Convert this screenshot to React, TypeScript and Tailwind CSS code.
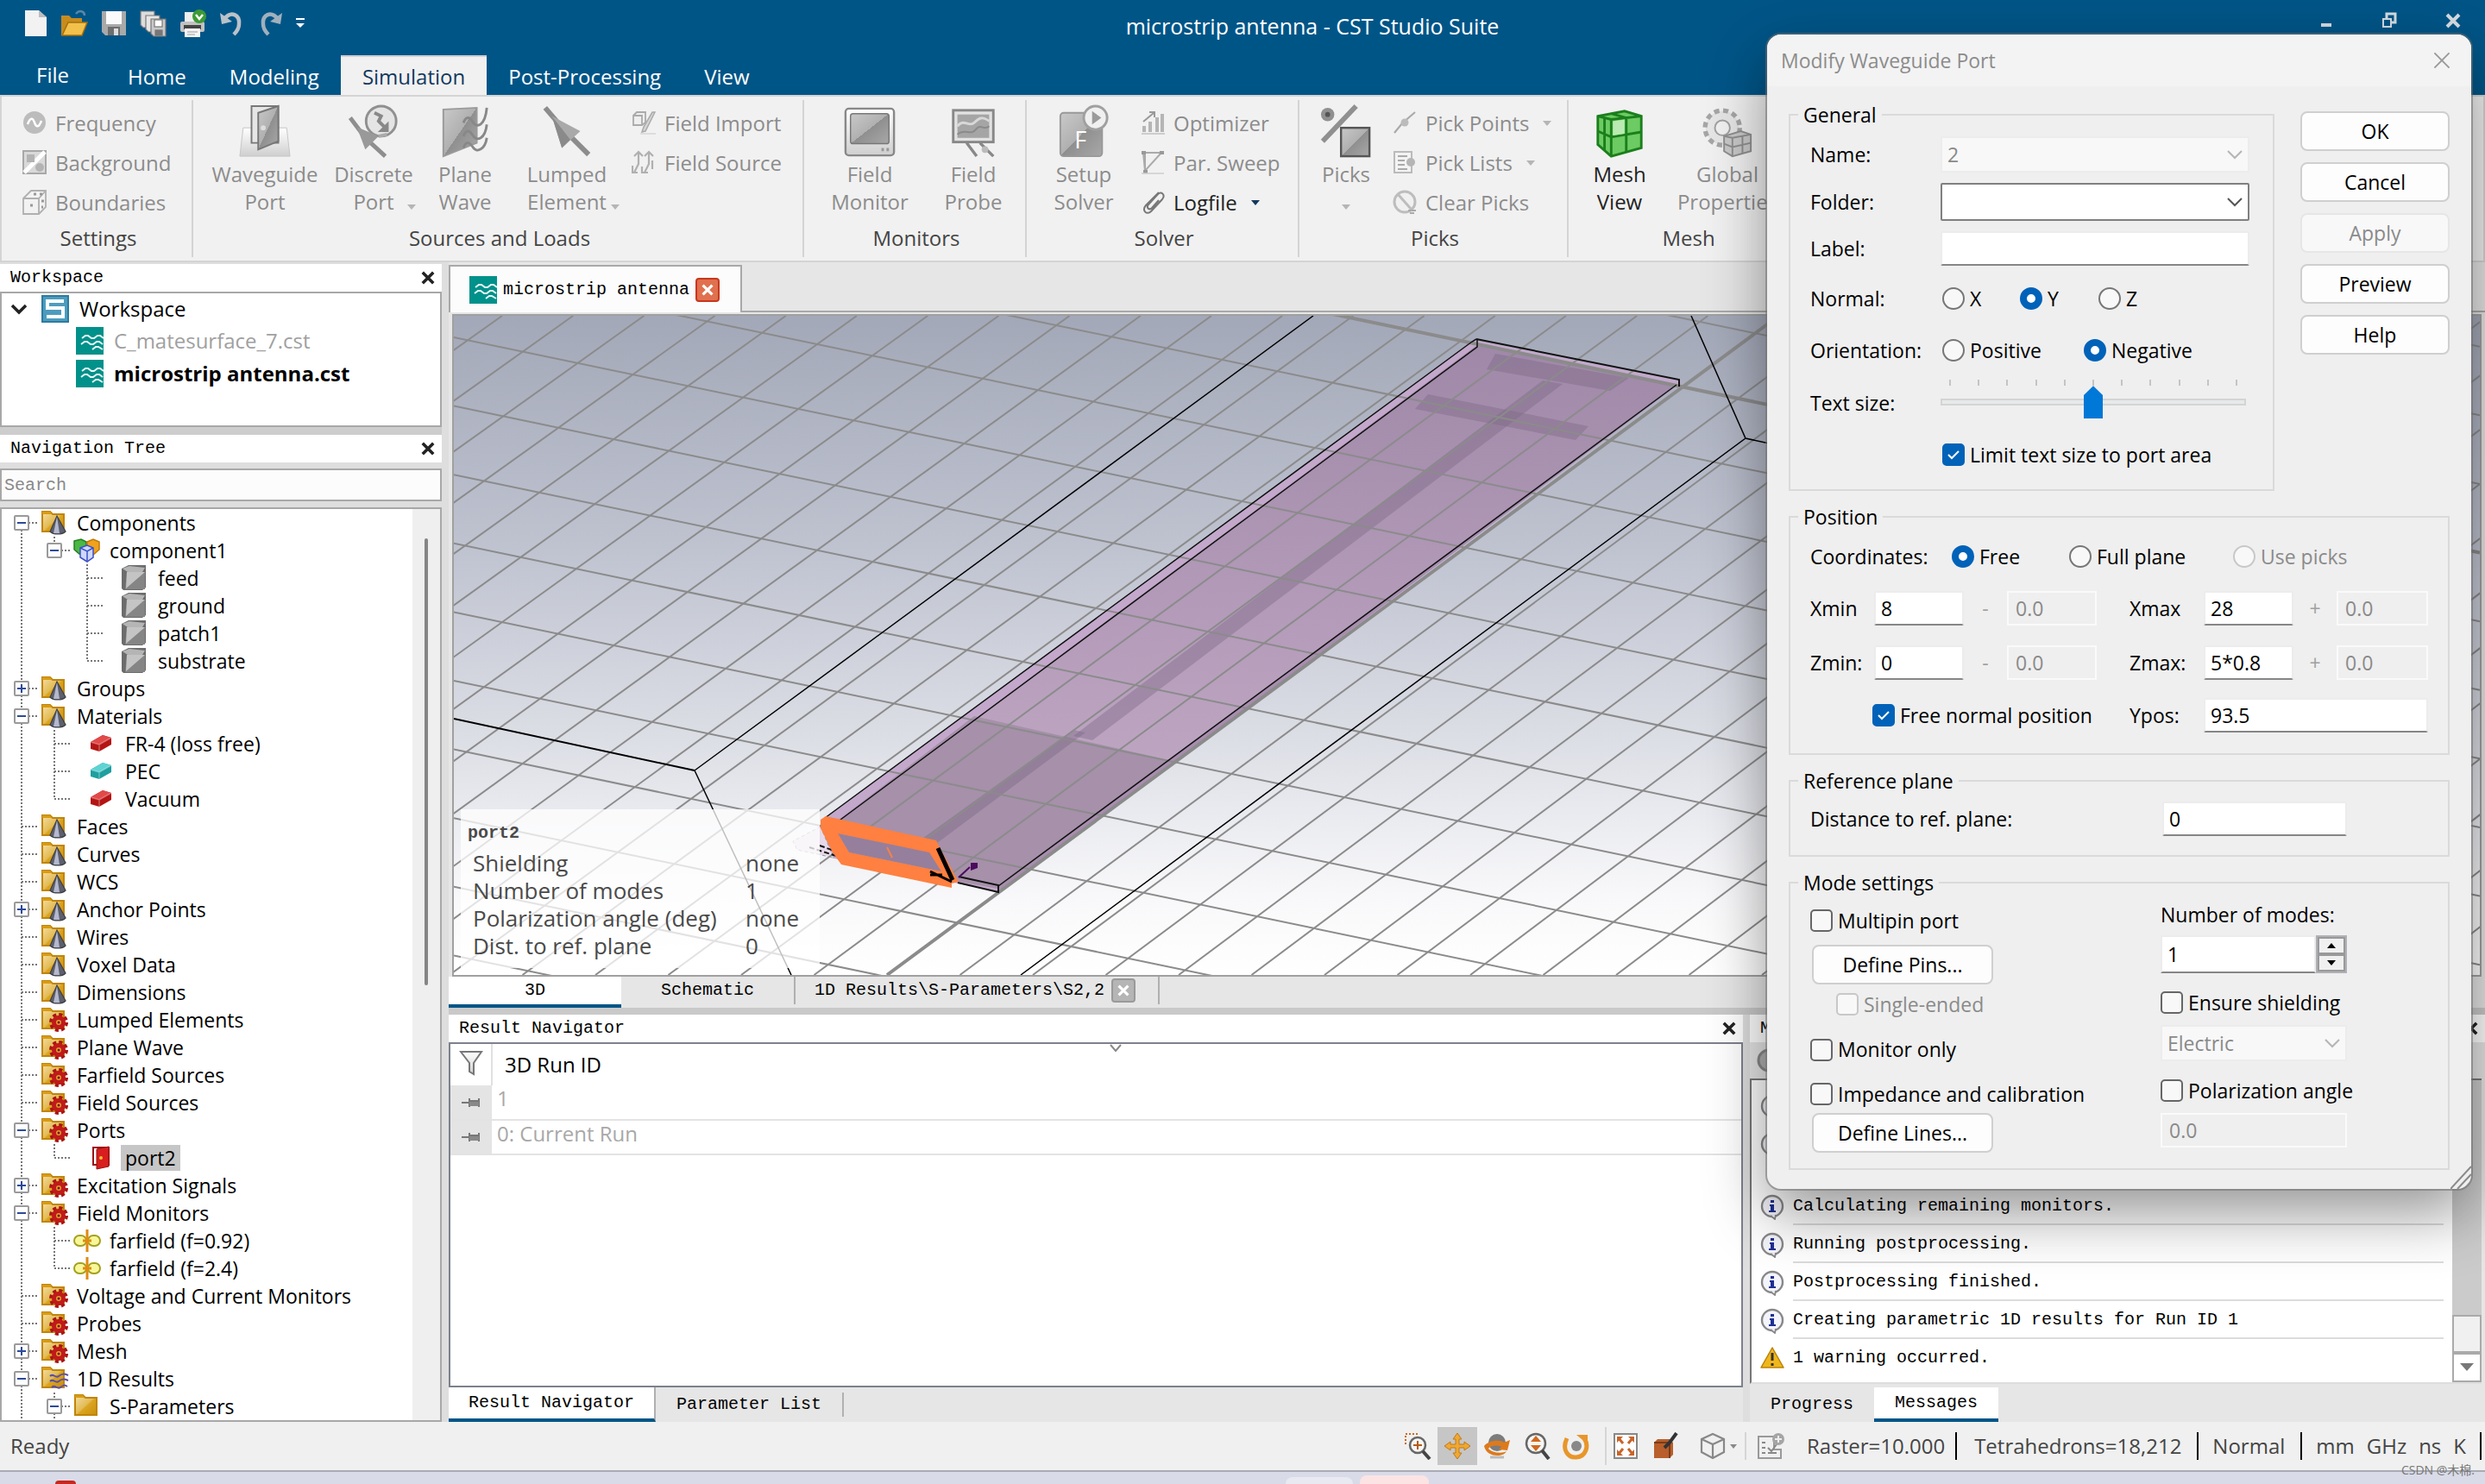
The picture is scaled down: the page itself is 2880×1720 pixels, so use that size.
import { useState } from "react";
import type { ReactNode } from "react";

const mono = "font-['Liberation_Mono','Noto_Sans_CJK_SC',monospace] text-[20px] leading-[32px]";

/* ---------- small shared glyphs ---------- */

const CloseX = ({ size = 18, color = "#222", width = 4 }: { size?: number; color?: string; width?: number }) => (
  <svg width={size} height={size} viewBox="0 0 18 18" stroke={color} strokeWidth={width} fill="none">
    <path d="M2 2 L16 16 M16 2 L2 16" />
  </svg>
);

const DownArrow = ({ color = "#b5b5b5" }: { color?: string }) => (
  <svg width="10" height="7" viewBox="0 0 10 7">
    <path d="M0 0H10L5 6Z" fill={color} />
  </svg>
);

const CstIcon = () => (
  <svg width="32" height="32" viewBox="0 0 32 32" className="shrink-0">
    <rect width="32" height="32" fill="#00918a" />
    <g fill="none" stroke="#e8fbfa" strokeWidth="2">
      <path d="M7 13l4-3h3l4 3h3l4-3h3l4 3" />
      <path d="M6 20l4-3h3l4 3h3l4-3h3l4 3" />
      <path d="M19 26l4-3h3l5 3" />
    </g>
  </svg>
);

/* ---------- title bar ---------- */

const QuickIcons = () => (
  <div className="flex items-center gap-[14px] pl-6 pt-[11px]">
    <button aria-label="New">
      <svg width="32" height="32" viewBox="0 0 32 32">
        <path d="M5 1H21L30 9V31H5Z" fill="#f2f2f2" />
        <path d="M21 1V9H30Z" fill="#bdbdbd" />
      </svg>
    </button>
    <button aria-label="Open">
      <svg width="32" height="32" viewBox="0 0 32 32">
        <path d="M18 5c4-5 10-3 10 2" stroke="#5b87a5" strokeWidth="2.5" fill="none" />
        <path d="M1 7H10L13 10H25V30H1Z" fill="#c78c1e" />
        <path d="M2 30L9 15H31L25 30Z" fill="#f2c14c" stroke="#a86f0a" strokeWidth="1.5" />
      </svg>
    </button>
    <button aria-label="Save">
      <svg width="32" height="32" viewBox="0 0 32 32">
        <path d="M2 2H30V30H6L2 26Z" fill="#a9a9a9" />
        <rect x="7" y="2" width="18" height="15" fill="#fafafa" />
        <rect x="9" y="20" width="14" height="10" fill="#6e6e6e" />
        <rect x="16" y="22" width="5" height="8" fill="#ddd" />
      </svg>
    </button>
    <button aria-label="Save all">
      <svg width="32" height="32" viewBox="0 0 32 32" stroke="#777" strokeWidth="1.2">
        <path d="M1 2H17V21H4L1 18Z" fill="#dcdcdc" />
        <path d="M7 7H23V26H10L7 23Z" fill="#e6e6e6" />
        <path d="M13 11H30V31H16L13 28Z" fill="#c9c9c9" />
        <rect x="17" y="12" width="9" height="8" fill="#fff" />
        <rect x="18" y="24" width="8" height="6" fill="#777" />
      </svg>
    </button>
    <button aria-label="Print">
      <svg width="32" height="32" viewBox="0 0 32 32">
        <rect x="6" y="3" width="18" height="12" fill="#eee" />
        <rect x="1" y="14" width="28" height="12" rx="2" fill="#c2c2c2" />
        <rect x="5" y="18" width="20" height="5" fill="#444" />
        <rect x="6" y="22" width="18" height="10" fill="#f5f5f5" />
        <path d="M9 26H21M9 29H18" stroke="#999" />
        <circle cx="23" cy="8" r="8" fill="#3c9b35" />
        <path d="M19 6l4 5l4-5" fill="none" stroke="#fff" strokeWidth="2.5" />
      </svg>
    </button>
    <button aria-label="Undo">
      <svg width="30" height="32" viewBox="0 0 30 32">
        <path d="M6 11C14 1 24 6 23 17c0 5-3 9-6 12" fill="none" stroke="#b9c2c9" strokeWidth="4.5" />
        <path d="M1 4L3 17L15 14Z" fill="#b9c2c9" />
      </svg>
    </button>
    <button aria-label="Redo">
      <svg width="30" height="32" viewBox="0 0 30 32">
        <path d="M24 11C16 1 6 6 7 17c0 5 3 9 6 12" fill="none" stroke="#9fb0bd" strokeWidth="4.5" />
        <path d="M29 4L27 17L15 14Z" fill="#9fb0bd" />
      </svg>
    </button>
    <button aria-label="Customize">
      <svg width="12" height="16" viewBox="0 0 12 16" fill="#fff">
        <rect x="1" y="2" width="10" height="2" />
        <path d="M1 8H11L6 13Z" />
      </svg>
    </button>
  </div>
);

const menuTabs = ["File", "Home", "Modeling", "Simulation", "Post-Processing", "View"];

const TitleBar = () => (
  <header className="bg-[#005587] text-white">
    <div className="flex h-16 items-start">
      <QuickIcons />
      <h1 className="flex-1 pt-[14px] text-center text-[25px] leading-8">microstrip antenna - CST Studio Suite</h1>
      <div className="flex gap-[56px] pr-7 pt-[14px]">
        <button aria-label="Minimize">
          <svg width="16" height="20"><rect x="2" y="13" width="12" height="4" fill="#d5dde2" /></svg>
        </button>
        <button aria-label="Restore">
          <svg width="18" height="20" fill="none" stroke="#d5dde2" strokeWidth="2">
            <path d="M6 7V2H16V12H12" strokeWidth="3" />
            <rect x="2" y="8" width="9" height="9" />
          </svg>
        </button>
        <button aria-label="Close"><CloseX color="#d5dde2" /></button>
      </div>
    </div>
    <nav className="flex h-[46px] pl-[17px] text-[24px] leading-8">
      {menuTabs.map((tab) => (
        <button
          key={tab}
          className={
            tab === "Simulation"
              ? "border-t-2 border-[#d0d0d0] bg-[#f1f1f1] px-[25px] pt-[2px] text-[#12395e]"
              : tab === "File"
              ? "mr-[18px] px-[25px]"
              : "px-[25px] pt-1"
          }
        >
          {tab}
        </button>
      ))}
    </nav>
  </header>
);

/* ---------- ribbon icons ---------- */

const RibbonDefs = () => (
  <svg width="0" height="0" className="absolute">
    <defs>
      <linearGradient id="steel" x1="0" y1="0" x2="1" y2="1">
        <stop offset="0" stopColor="#c9c9c9" />
        <stop offset="0.5" stopColor="#b0b0b0" />
        <stop offset="0.5" stopColor="#8f8f8f" />
        <stop offset="1" stopColor="#a8a8a8" />
      </linearGradient>
      <linearGradient id="light" x1="0" y1="0" x2="0" y2="1">
        <stop offset="0" stopColor="#fff" />
        <stop offset="1" stopColor="#cfcfcf" />
      </linearGradient>
      <linearGradient id="gold" x1="0" y1="0" x2="1" y2="1">
        <stop offset="0" stopColor="#f5dfa4" />
        <stop offset="0.5" stopColor="#e3bb55" />
        <stop offset="0.55" stopColor="#dba520" />
        <stop offset="1" stopColor="#c98f0c" />
      </linearGradient>
    </defs>
  </svg>
);

const big: Record<string, ReactNode> = {
  waveguide: (
    <>
      <path d="M6 28H58L62 62H2Z" fill="url(#light)" stroke="#c5c5c5" />
      <path d="M16 2H48V46H16Z" fill="#e6e6e6" stroke="#777" strokeWidth="2" />
      <path d="M24 10L48 2V44L24 54Z" fill="url(#steel)" stroke="#777" strokeWidth="2" />
      <circle cx="30" cy="28" r="3" fill="#ddd" />
    </>
  ),
  discrete: (
    <>
      <circle cx="41" cy="20" r="18" fill="#e4e4e4" stroke="#909090" strokeWidth="3" />
      <path d="M33 10l8 4l-3 6l10 10" fill="none" stroke="#888" strokeWidth="4" />
      <path d="M50 20V33H37Z" fill="#888" />
      <path d="M4 16L22 40L46 62" fill="none" stroke="#8e8e8e" strokeWidth="5" />
      <path d="M12 27L38 38L22 54Z" fill="#999" />
      <path d="M38 38L48 36" stroke="#aaa" strokeWidth="4" />
    </>
  ),
  plane: (
    <>
      <path d="M6 6L46 4V46L6 62Z" fill="url(#steel)" stroke="#9a9a9a" strokeWidth="2" />
      <g fill="none" stroke="#888" strokeWidth="3">
        <path d="M30 22c4-10 8-6 12 0s14 4 16-18" />
        <path d="M30 38c4-10 8-6 12 0s14 4 16-14" />
        <path d="M30 52c4-10 8-6 12 0s14 2 16-12" />
      </g>
    </>
  ),
  lumped: (
    <>
      <path d="M6 4L30 32L58 60" fill="none" stroke="#8c8c8c" strokeWidth="6" />
      <path d="M14 14L48 32L26 52Z" fill="#a9a9a9" />
      <path d="M14 14L36 42L26 52Z" fill="#8a8a8a" />
    </>
  ),
  monitor: (
    <>
      <rect x="3" y="5" width="58" height="56" rx="4" fill="url(#light)" stroke="#888" strokeWidth="2.5" />
      <rect x="9" y="11" width="46" height="36" rx="3" fill="url(#steel)" stroke="#777" strokeWidth="1.5" />
      <path d="M46 54H49M52 54H55" stroke="#999" strokeWidth="4" />
    </>
  ),
  probe: (
    <>
      <rect x="8" y="7" width="48" height="38" fill="#e2e2e2" stroke="#888" strokeWidth="3" />
      <rect x="13" y="12" width="38" height="28" fill="#a5a5a5" />
      <path d="M13 26c8-10 14 2 20-4s10-8 18-2" fill="none" stroke="#d8d8d8" strokeWidth="3" />
      <path d="M13 36c8-8 16 2 22-6s10 2 16-4" fill="none" stroke="#8a8a8a" strokeWidth="2" />
      <path d="M24 46L36 62M40 46L56 62" stroke="#888" strokeWidth="3.5" />
      <circle cx="46" cy="54" r="4" fill="#bbb" />
    </>
  ),
  setup: (
    <>
      <rect x="4" y="10" width="50" height="52" rx="4" fill="url(#steel)" stroke="#999" strokeWidth="2" />
      <circle cx="46" cy="16" r="14" fill="#f0f0f0" stroke="#a0a0a0" strokeWidth="3" />
      <path d="M42 8V24L53 16Z" fill="#9a9a9a" />
      <text x="21" y="53" fontSize="28" fill="#fff" fontFamily="Open Sans">F</text>
    </>
  ),
  picks: (
    <>
      <circle cx="10" cy="12" r="8" fill="#909090" />
      <circle cx="10" cy="12" r="3" fill="#555" />
      <path d="M4 44L44 2" stroke="#909090" strokeWidth="6" />
      <rect x="26" y="28" width="34" height="34" fill="url(#steel)" stroke="#555" strokeWidth="2.5" />
    </>
  ),
  mesh: (
    <>
      <path d="M6 14L38 8L58 14V52L22 62L6 48Z" fill="#6ccb62" stroke="#1b7f1c" strokeWidth="3" />
      <path d="M6 14L22 18L58 14M22 18V62M40 16V57M6 32L22 39L58 33M14 16V55M22 11L40 16" fill="none" stroke="#1b7f1c" strokeWidth="3" />
      <path d="M24 20L38 18V35L24 37Z" fill="#b9ebb2" />
    </>
  ),
  gear: (
    <>
      <circle cx="26" cy="28" r="20" fill="#e2e2e2" stroke="#a6a6a6" strokeWidth="7" strokeDasharray="6 4.5" />
      <circle cx="26" cy="28" r="18" fill="#e6e6e6" />
      <circle cx="26" cy="28" r="9" fill="#f1f1f1" stroke="#a0a0a0" strokeWidth="2" />
      <path d="M28 38L48 32L60 36V56L38 62L28 56Z" fill="#c9c9c9" stroke="#8f8f8f" strokeWidth="2" />
      <path d="M38 40V62M50 37V59M28 47L38 51L60 46M28 38L38 40L60 36" fill="none" stroke="#8f8f8f" strokeWidth="2" />
    </>
  ),
};

const small: Record<string, ReactNode> = {
  frequency: (
    <>
      <circle cx="14" cy="14" r="13" fill="#bcbcbc" />
      <path d="M6 16c3-8 6-8 8-2s5 6 8-2" fill="none" stroke="#fff" strokeWidth="2.5" />
    </>
  ),
  background: (
    <>
      <rect x="1" y="1" width="26" height="26" fill="#d9d9d9" stroke="#a8a8a8" strokeWidth="2" />
      <path d="M2 26L26 2" stroke="#fff" strokeWidth="5" />
      <rect x="5" y="5" width="9" height="9" fill="#b3b3b3" />
      <circle cx="20" cy="20" r="5" fill="#b3b3b3" />
    </>
  ),
  boundaries: (
    <>
      <path d="M1 10L10 1H27V20L19 28H1Z" fill="#f2f2f2" stroke="#b0b0b0" strokeWidth="1.8" />
      <path d="M1 10H19V28M19 10L27 1" fill="none" stroke="#b0b0b0" strokeWidth="1.8" />
      <path d="M9 18h3M13 5h3M20 5h3M22 13h3M22 20h2" stroke="#999" strokeWidth="3" />
    </>
  ),
  fieldImport: (
    <>
      <path d="M2 6L6 2H16V14L12 17H2Z" fill="#eee" stroke="#aaa" strokeWidth="1.8" />
      <path d="M2 6H12V17" fill="none" stroke="#aaa" strokeWidth="1.8" />
      <path d="M27 2L16 24L12 25L14 19L24 2Z" fill="#d5d5d5" stroke="#aaa" strokeWidth="1.5" />
      <path d="M10 27H28" stroke="#ddd" strokeWidth="2" />
    </>
  ),
  fieldSource: (
    <g fill="none" stroke="#b0b0b0" strokeWidth="2.2">
      <path d="M3 7L8 2L13 7M8 3V16L3 26M1 18V26H7" />
      <path d="M15 7L20 2L25 7M20 3V16L15 26M12 19V26H19M24 12V22" />
    </g>
  ),
  optimizer: (
    <>
      <path d="M4 25V18M11 25V13M19 25V8M25 25V4" stroke="#b5b5b5" strokeWidth="4" />
      <path d="M3 13L15 3M10 2H16V8" fill="none" stroke="#999" strokeWidth="2" />
      <path d="M1 27H28" stroke="#ccc" strokeWidth="2" />
    </>
  ),
  sweep: (
    <>
      <path d="M3 3H24L5 24Z M5 3V25" fill="none" stroke="#aaa" strokeWidth="2" />
      <path d="M1 3h5M22 3h5M3 25h5" stroke="#999" strokeWidth="4" />
      <path d="M1 27H27" stroke="#ccc" strokeWidth="1.5" />
    </>
  ),
  log: (
    <path
      d="M21 3L6 18c-5 6 1 12 6 7L25 11c4-5-1-10-5-6L9 17c-3 4 1 7 4 4L21 12"
      fill="none"
      stroke="#777"
      strokeWidth="2"
    />
  ),
  pickPoint: (
    <>
      <path d="M2 26L11 15L26 2" fill="none" stroke="#aaa" strokeWidth="2.2" />
      <circle cx="14" cy="14" r="4.5" fill="#bbb" />
    </>
  ),
  pickList: (
    <>
      <rect x="2" y="2" width="20" height="24" fill="#f3f3f3" stroke="#bbb" strokeWidth="2" />
      <path d="M6 7H17M6 12H14M6 17H14M6 22H17" stroke="#aaa" strokeWidth="2" />
      <circle cx="21" cy="14" r="5" fill="#b5b5b5" />
    </>
  ),
  clear: (
    <>
      <circle cx="14" cy="14" r="12" fill="#f0f0f0" stroke="#bdbdbd" strokeWidth="3" />
      <path d="M6 5L22 23" stroke="#bdbdbd" strokeWidth="3" />
      <path d="M18 24h9M20 27h5" stroke="#aaa" strokeWidth="2" />
    </>
  ),
};

const BigButton = ({
  icon, lines, width, active, arrow,
}: { icon: string; lines: string[]; width: string; active?: boolean; arrow?: boolean }) => (
  <button className={`relative flex flex-col items-center text-[24px] leading-8 ${width} ${active ? "text-[#222]" : "text-[#8c8c8c]"}`}>
    <svg width="62" height="66" viewBox="0 0 64 66">{big[icon]}</svg>
    {lines.map((l) => <span key={l}>{l}</span>)}
    {arrow && lines.length > 1 && (
      <span className="absolute bottom-[6px] right-[10px] leading-none"><DownArrow /></span>
    )}
    {arrow && lines.length === 1 && <span className="flex h-8 items-center pt-3"><DownArrow /></span>}
  </button>
);

const SmallButton = ({
  icon, label, active, arrow,
}: { icon: string; label: string; active?: boolean; arrow?: boolean }) => (
  <button className={`flex h-[46px] items-center text-[24px] leading-8 ${active ? "text-[#222]" : "text-[#8c8c8c]"}`}>
    <svg width="28" height="30" viewBox="0 0 28 30" className="mr-[10px]">{small[icon]}</svg>
    {label}
    {arrow && <span className="ml-4"><DownArrow color={active ? "#12395e" : "#b5b5b5"} /></span>}
  </button>
);

const Group = ({ title, width, children }: { title: string; width: string; children: ReactNode }) => (
  <section className={`my-1 flex shrink-0 flex-col border-r-2 border-[#d4d4d4] pt-1 ${width}`}>
    <div className="flex h-[138px] items-start">{children}</div>
    <h2 className="pl-1 text-center text-[24px] leading-9 text-[#444]">{title}</h2>
  </section>
);

const Ribbon = () => (
  <div className="flex h-[194px] overflow-hidden border-2 border-[#d4d4d4] bg-[#f1f1f1]">
    <Group title="Settings" width="w-[222px]">
      <div className="pl-6">
        <SmallButton icon="frequency" label="Frequency" />
        <SmallButton icon="background" label="Background" />
        <SmallButton icon="boundaries" label="Boundaries" />
      </div>
    </Group>
    <Group title="Sources and Loads" width="w-[708px] ">
      <div className="flex pl-4">
        <BigButton icon="waveguide" lines={["Waveguide", "Port"]} width="w-[134px]" />
        <BigButton icon="discrete" lines={["Discrete", "Port"]} width="w-[118px]" arrow />
        <BigButton icon="plane" lines={["Plane", "Wave"]} width="w-[94px]" />
        <BigButton icon="lumped" lines={["Lumped", "Element"]} width="w-[142px]" arrow />
        <div className="pl-1">
          <SmallButton icon="fieldImport" label="Field Import" />
          <SmallButton icon="fieldSource" label="Field Source" />
        </div>
      </div>
    </Group>
    <Group title="Monitors" width="w-[258px]">
      <div className="flex pl-3">
        <BigButton icon="monitor" lines={["Field", "Monitor"]} width="w-[128px]" />
        <BigButton icon="probe" lines={["Field", "Probe"]} width="w-[112px]" />
      </div>
    </Group>
    <Group title="Solver" width="w-[316px]">
      <div className="flex pl-3">
        <BigButton icon="setup" lines={["Setup", "Solver"]} width="w-[108px]" />
        <div className="pl-3">
          <SmallButton icon="optimizer" label="Optimizer" />
          <SmallButton icon="sweep" label="Par. Sweep" />
          <SmallButton icon="log" label="Logfile" active arrow />
        </div>
      </div>
    </Group>
    <Group title="Picks" width="w-[312px]">
      <div className="flex pl-3">
        <BigButton icon="picks" lines={["Picks"]} width="w-[84px]" arrow />
        <div className="pl-3">
          <SmallButton icon="pickPoint" label="Pick Points" arrow />
          <SmallButton icon="pickList" label="Pick Lists" arrow />
          <SmallButton icon="clear" label="Clear Picks" />
        </div>
      </div>
    </Group>
    <Group title="Mesh" width="w-[276px]">
      <div className="flex pl-3">
        <BigButton icon="mesh" lines={["Mesh", "View"]} width="w-[94px]" active />
        <BigButton icon="gear" lines={["Global", "Properties"]} width="w-[156px]" />
      </div>
    </Group>
  </div>
);

/* ---------- navigation tree ---------- */

const Folder = ({ children }: { children?: ReactNode }) => (
  <svg width="34" height="32" viewBox="0 0 34 32">
    <path d="M3 3H12L15 6H28V26H3Z" fill="url(#gold)" stroke="#c08508" strokeWidth="2" />
    <path d="M3 6V3H12L14 6Z" fill="#d99b12" />
    {children}
  </svg>
);

const Gear = () => (
  <g>
    <circle cx="22" cy="19" r="9" fill="none" stroke="#a81414" strokeWidth="4" strokeDasharray="4 3.07" />
    <circle cx="22" cy="19" r="5.5" fill="#e0a030" stroke="#c01a1a" strokeWidth="5" />
    <circle cx="22" cy="19" r="1.5" fill="#7a1010" />
  </g>
);

const Brick = ({ top, side }: { top: string; side: string }) => (
  <svg width="28" height="24" viewBox="0 0 28 24">
    <path d="M2 10L16 2L26 5V13L12 21L2 18Z" fill={side} />
    <path d="M2 10L16 2L26 5L12 13Z" fill={top} />
    <path d="M2 10L12 13V21M12 13L26 5" fill="none" stroke="#fff" strokeOpacity="0.3" strokeWidth="1.5" />
  </svg>
);

const treeIcons: Record<string, ReactNode> = {
  solid: (
    <Folder>
      <path d="M20 8L30 26C26 30 16 30 12 26Z" fill="#5c5f6c" stroke="#3e3e46" strokeWidth="1.2" />
      <path d="M20 9L23 28H16Z" fill="#b4b9cf" />
    </Folder>
  ),
  gear: <Folder><Gear /></Folder>,
  wave: (
    <Folder>
      <g fill="none" stroke="#5a4ea8" strokeWidth="2">
        <path d="M12 13c4-4 6 3 10 0s6-3 11-1M12 19c4-4 6 3 10 0s6-3 11-1M14 26c4-4 6 3 10 0s5-3 8-1" />
      </g>
    </Folder>
  ),
  folder: <Folder />,
  component: (
    <svg width="34" height="30" viewBox="0 0 34 30" strokeWidth="1.5">
      <path d="M2 4L10 2L16 5V15L8 19L2 14Z" fill="#4cb844" stroke="#267f22" />
      <path d="M17 5L24 2L31 5V14L24 20L17 14Z" fill="#f0a21e" stroke="#c07808" />
      <path d="M9 12L17 9L24 12V23L17 28L9 23Z" fill="#cfd8ff" stroke="#3c50c8" />
      <path d="M9 12L17 16L24 12M17 16V28" fill="none" stroke="#3c50c8" />
    </svg>
  ),
  cube: (
    <svg width="32" height="30" viewBox="0 0 32 30">
      <path d="M2 4L10 0H30V26L26 29H4L2 27Z" fill="#6c6c6c" />
      <path d="M9 8H26L29 3L11 1L3 4Z" fill="#b5b5b5" />
      <path d="M8 8H29V28H6Z" fill="#858585" />
      <path d="M8 8H29L7 27Z" fill="#c4c4c4" />
    </svg>
  ),
  red: <Brick top="#e24a4a" side="#b51414" />,
  cyan: <Brick top="#5fd3d3" side="#1f9f9f" />,
  port: (
    <svg width="22" height="28" viewBox="0 0 22 28">
      <path d="M2 2H20V22H2Z" fill="#fff" stroke="#9a0f0f" strokeWidth="2" />
      <path d="M6 4L20 1V24L6 27Z" fill="#d81e1e" stroke="#9a0f0f" strokeWidth="1" />
      <circle cx="11" cy="14" r="2" fill="#f0c030" />
    </svg>
  ),
  farfield: (
    <svg width="34" height="26" viewBox="0 0 34 26">
      <rect x="2" y="7" width="14" height="12" rx="6" fill="#f7f79a" stroke="#a5a01e" strokeWidth="2" />
      <rect x="18" y="7" width="14" height="12" rx="6" fill="#f7f79a" stroke="#a5a01e" strokeWidth="2" />
      <path d="M17 0V26M12 13H22" stroke="#e08a12" strokeWidth="3" />
    </svg>
  ),
};

type Node = { label: string; icon: string; depth?: number; open?: boolean; last?: boolean; wide?: boolean };

const treeNodes: Node[] = [
  { label: "Components", icon: "solid", open: true },
  { label: "component1", icon: "component", depth: 1, open: true, last: true },
  { label: "feed", icon: "cube", depth: 2, wide: true },
  { label: "ground", icon: "cube", depth: 2, wide: true },
  { label: "patch1", icon: "cube", depth: 2, wide: true },
  { label: "substrate", icon: "cube", depth: 2, wide: true, last: true },
  { label: "Groups", icon: "solid", open: false },
  { label: "Materials", icon: "solid", open: true },
  { label: "FR-4 (loss free)", icon: "red", depth: 1, wide: true },
  { label: "PEC", icon: "cyan", depth: 1, wide: true },
  { label: "Vacuum", icon: "red", depth: 1, wide: true, last: true },
  { label: "Faces", icon: "solid" },
  { label: "Curves", icon: "solid" },
  { label: "WCS", icon: "solid" },
  { label: "Anchor Points", icon: "solid", open: false },
  { label: "Wires", icon: "solid" },
  { label: "Voxel Data", icon: "solid" },
  { label: "Dimensions", icon: "solid" },
  { label: "Lumped Elements", icon: "gear" },
  { label: "Plane Wave", icon: "gear" },
  { label: "Farfield Sources", icon: "gear" },
  { label: "Field Sources", icon: "gear" },
  { label: "Ports", icon: "gear", open: true },
  { label: "port2", icon: "port", depth: 1, wide: true, last: true },
  { label: "Excitation Signals", icon: "gear", open: false },
  { label: "Field Monitors", icon: "gear", open: true },
  { label: "farfield (f=0.92)", icon: "farfield", depth: 1 },
  { label: "farfield (f=2.4)", icon: "farfield", depth: 1, last: true },
  { label: "Voltage and Current Monitors", icon: "gear" },
  { label: "Probes", icon: "gear" },
  { label: "Mesh", icon: "gear", open: false },
  { label: "1D Results", icon: "wave", open: true },
  { label: "S-Parameters", icon: "folder", depth: 1, open: true },
];

const Guide = ({ stub, last, first }: { stub?: boolean; last?: boolean; first?: boolean }) => (
  <svg width="38" height="32" viewBox="0 0 38 32" className="shrink-0" stroke="#777" strokeWidth="2" strokeDasharray="2 2">
    <path d={`M19 ${first ? 16 : 0}V${last ? 16 : 32}`} />
    {stub && <path d="M19 16H38" />}
  </svg>
);

const TreeRow = ({ node, first, selected, onSelect }: { node: Node; first: boolean; selected: boolean; onSelect: () => void }) => {
  const depth = node.depth ?? 0;
  return (
    <li className="flex h-8 items-center pl-1">
      {depth > 0 && <Guide />}
      {depth > 1 && <span className="w-[38px] shrink-0" />}
      <span className="relative flex shrink-0">
        <Guide stub last={node.last} first={first} />
        {node.open !== undefined && (
          <button aria-label={`Toggle ${node.label}`} className="absolute left-[10px] top-[7px] h-[18px] w-[18px] rounded-xs border-2 border-[#9a9a9a] bg-white">
            <svg width="14" height="14" viewBox="0 0 14 14" stroke="#2c4a9a" strokeWidth="2">
              <path d={node.open ? "M2 7H12" : "M2 7H12M7 2V12"} />
            </svg>
          </button>
        )}
      </span>
      <span className={`flex shrink-0 ${node.wide ? "w-[58px] justify-center pl-3" : "w-[40px] pl-[2px]"}`}>{treeIcons[node.icon]}</span>
      <button onClick={onSelect} className={`whitespace-nowrap px-[5px] leading-[30px] ${selected ? "bg-[#c6c6c6]" : ""}`}>
        {node.label}
      </button>
    </li>
  );
};

const PanelHeader = ({ title }: { title: string }) => (
  <div className={`flex h-8 shrink-0 items-center justify-between bg-white pl-3 pr-2 ${mono}`}>
    <h2>{title}</h2>
    <button aria-label={`Close ${title}`}><CloseX size={16} /></button>
  </div>
);

const LeftPanel = () => {
  const [selected, setSelected] = useState("port2");
  return (
    <aside className="flex w-[512px] shrink-0 flex-col pt-[2px]">
      <PanelHeader title="Workspace" />
      <ul className="h-[157px] overflow-hidden border-2 border-[#a8a8a8] bg-white text-[24px] leading-[36px]">
        <li className="flex items-center gap-3 pl-[10px]">
          <svg width="20" height="14" viewBox="0 0 20 14" fill="none" stroke="#222" strokeWidth="3.5"><path d="M2 3L10 11L18 3" /></svg>
          <svg width="32" height="32" viewBox="0 0 32 32" className="ml-1">
            <rect x="1" y="1" width="30" height="30" fill="#4d9cbd" stroke="#2d7ba1" strokeWidth="2" />
            <path d="M26 7H7V15H25V25H6" fill="none" stroke="#fff" strokeWidth="4" />
          </svg>
          Workspace
        </li>
        <li className="flex items-center gap-3 pl-[86px] leading-[38px] text-[#a0a0a0]"><CstIcon />C_matesurface_7.cst</li>
        <li className="flex items-center gap-3 pl-[86px] leading-[38px] font-bold"><CstIcon />microstrip antenna.cst</li>
      </ul>
      <div className="h-[9px] shrink-0 bg-[#cdcdcd]" />
      <PanelHeader title="Navigation Tree" />
      <input
        aria-label="Search"
        placeholder="Search"
        className={`my-[7px] h-[38px] w-full shrink-0 border-2 border-[#a8a8a8] bg-[#fcfcfc] px-[3px] placeholder:text-[#888] ${mono}`}
      />
      <div className="flex min-h-0 flex-1 overflow-hidden border-2 border-[#a8a8a8] bg-white">
        <ul className="min-w-0 flex-1 text-[23px]">
          {treeNodes.map((n, i) => (
            <TreeRow key={n.label} node={n} first={i === 0} selected={selected === n.label} onSelect={() => setSelected(n.label)} />
          ))}
        </ul>
        <div className="flex w-8 justify-center bg-[#efefef] pt-[34px]">
          <div className="h-[518px] w-1 rounded bg-[#858585]" />
        </div>
      </div>
    </aside>
  );
};

/* ---------- 3D view ---------- */

const shallow = Array.from({ length: 18 }, (_, i) => 391 + 79.6 * (i - 7));
const steep = Array.from({ length: 42 }, (_, i) => i);

const Scene = () => (
  <svg className="absolute inset-0 h-full w-full" viewBox="526 366 2348 764" preserveAspectRatio="xMinYMin slice">
    <defs>
      <linearGradient id="sky" x1="0" y1="0" x2="0" y2="1">
        <stop offset="0" stopColor="#a3a8b8" />
        <stop offset="0.35" stopColor="#bfc3d0" />
        <stop offset="0.65" stopColor="#dddfe6" />
        <stop offset="0.88" stopColor="#f8f8fa" />
        <stop offset="1" stopColor="#fff" />
      </linearGradient>
      <linearGradient id="substrate" x1="0" y1="0" x2="0" y2="1">
        <stop offset="0" stopColor="#a088a8" />
        <stop offset="0.7" stopColor="#bba3c0" />
        <stop offset="1" stopColor="#c2acc6" />
      </linearGradient>
    </defs>
    <rect x="526" y="366" width="2348" height="764" fill="url(#sky)" />
    {/* board */}
    <path d="M1708 394L1950 442L1160 1034L962 994L952 951Z" fill="#c3a8cb" />
    <path d="M1712 400L1944 446L1157 1030L975 998L966 955Z" fill="url(#substrate)" />
    <path d="M1950 442L1160 1034L1157 1027L1944 446Z" fill="#a98db0" />
    <path d="M1129 830L1355 881L1157 1030L975 998L966 955Z" fill="#a690aa" />
    <path d="M951 958L919 975L924 985L966 994Z" fill="#e6d9e9" stroke="#999" strokeWidth="1" strokeDasharray="4 3" />
    {/* feed line and patches */}
    <g fill="#7d6885" fillOpacity="0.42">
      <path d="M1733 410L1888 438L1866 453L1723 428Z" />
      <path d="M1655 457L1841 494L1826 510L1640 474Z" />
      <path d="M1788 441L1811 445L1266 858L1244 853Z" />
      <path d="M1244 846L1258 849L1054 1001L1034 997Z" />
    </g>
    {/* ground grid */}
    <g stroke="#8b8b8b" strokeWidth="2" fill="none">
      {shallow.map((y, i) => (
        <line key={i} x1="526" y1={y} x2="2874" y2={y + 2348 * 0.208} strokeWidth={i === 4 ? 4 : 2} />
      ))}
      {steep.map((i) => (
        <line key={i} x1={582 + 82.2 * i} y1="366" x2={-493 + 84.5 * i} y2="1130" strokeWidth={i === 18 ? 4 : 2} />
      ))}
    </g>
    {/* bounding box */}
    <g stroke="#000" strokeWidth="1.5" fill="none">
      <path d="M526 833L805 893" strokeWidth="2" />
      <path d="M805 893L917 1130" />
      <path d="M1960 366L2023 508L2060 516" />
      <path d="M805 893L1522 366M2023 508L1183 1130" />
    </g>
    <g stroke="#111" strokeWidth="1.5" fill="none">
      <path d="M952 951L1706 396L1711 393" />
      <path d="M1711 393L1946 440V448" strokeWidth="2" />
      <path d="M1943 446L1157 1027" />
      <path d="M970 953L1712 402V394" />
      <path d="M1111 1016L1157 1026V1034L1110 1023" strokeWidth="2" />
      <path d="M950 980L972 988M938 982L972 993" strokeWidth="2" strokeDasharray="6 3" />
    </g>
    {/* port frame */}
    <path d="M971 966L1077 986L1091 1010L984 988Z" fill="#957f9d" />
    <path
      d="M957 946L1085 974L1090 984L1111 1022L1103 1024V1029L975 1002L965 988L951 960V950ZM971 966L984 988L1091 1010L1077 988Z"
      fill="#ff8040"
      fillRule="evenodd"
    />
    <path d="M1087 983L1104 1020" stroke="#000" strokeWidth="5" />
    <path d="M1078 1010L1103 1022M1078 1014H1092" stroke="#000" strokeWidth="3" />
    <path d="M1028 982L1034 994" stroke="#ff8040" strokeWidth="2" />
    <path d="M1111 1017L1124 1005" stroke="#4b0a5e" strokeWidth="2" />
    <path d="M1125 1000H1133V1006L1125 1009Z" fill="#4b0a5e" />
  </svg>
);

const portInfo = [
  ["Shielding", "none"],
  ["Number of modes", "1"],
  ["Polarization angle (deg)", "none"],
  ["Dist. to ref. plane", "0"],
];

const SmallClose = ({ color }: { color: string }) => (
  <span className={`flex h-7 w-7 items-center justify-center rounded-sm border-2 ${color}`}>
    <CloseX size={14} color="#fff" width={4} />
  </span>
);

const ViewArea = () => (
  <section className="flex min-h-0 flex-1 flex-col bg-[#e6e6e6] pt-[3px]">
    <div className="flex h-[55px] shrink-0 border-b-2 border-[#a8a8a8]">
      <div className={`-mb-[2px] flex items-center gap-[7px] border-2 border-b-0 border-[#a8a8a8] bg-[#fcfcfc] pl-[22px] pr-6 ${mono}`}>
        <CstIcon />
        <span>microstrip antenna</span>
        <button aria-label="Close project"><SmallClose color="border-[#c8381e] bg-[#e0704e]" /></button>
      </div>
    </div>
    <div className="relative ml-1 mr-1 mt-[2px] min-h-0 flex-1 border-2 border-[#a0a0a0]">
      <Scene />
      <div className="absolute bottom-2 left-2 w-[416px] bg-white/75 pb-[10px] pl-2 pt-[10px] text-[26px] leading-8 text-[#4a4a4a]">
        <h3 className="font-['Liberation_Mono',monospace] text-[20px] font-bold leading-9">port2</h3>
        <dl className="grid grid-cols-[316px_auto] pl-[6px]">
          {portInfo.map(([k, v]) => (
            <div key={k} className="contents">
              <dt>{k}</dt>
              <dd>{v}</dd>
            </div>
          ))}
        </dl>
      </div>
    </div>
    <div className={`flex h-9 shrink-0 items-start ${mono}`}>
      <button className="h-9 w-[200px] border-b-4 border-[#005587] bg-white">3D</button>
      <button className="h-8 w-[202px] border-r-2 border-[#b0b0b0]">Schematic</button>
      <div className="flex h-8 items-center gap-2 border-r-2 border-[#b0b0b0] pl-[22px] pr-[26px]">
        <button>1D Results\S-Parameters\S2,2</button>
        <button aria-label="Close result"><SmallClose color="border-[#9a9a9a] bg-[#b5b5b5]" /></button>
      </div>
    </div>
  </section>
);

/* ---------- lower panels ---------- */

const Pin = () => (
  <svg width="24" height="16" viewBox="0 0 24 16">
    <path d="M1 8H9" stroke="#777" strokeWidth="2" />
    <path d="M10 3V13M10 6H21M21 3V13" stroke="#777" strokeWidth="2" />
    <rect x="10" y="7" width="11" height="5" fill="#888" />
  </svg>
);

const ResultNavigator = () => (
  <section className="flex min-w-0 flex-1 flex-col">
    <PanelHeader title="Result Navigator" />
    <div className="relative flex-1 border-2 border-[#7d818c] bg-white text-[24px]">
      <svg width="14" height="10" viewBox="0 0 14 10" className="absolute left-1/2 top-0 ml-4" fill="none" stroke="#888" strokeWidth="2"><path d="M1 1L7 8L13 1" /></svg>
      <table className="w-full border-collapse">
        <thead>
          <tr className="h-12">
            <th className="w-12 border-r-2 border-[#e0e0e0] p-0">
              <svg width="28" height="30" viewBox="0 0 28 30" className="mx-auto -mt-1">
                <path d="M2 2H26L17 15V28L12 25V15Z" fill="url(#light)" stroke="#777" strokeWidth="2" />
              </svg>
            </th>
            <th className="p-0 pl-[14px] text-left font-normal leading-8">3D Run ID</th>
          </tr>
        </thead>
        <tbody className="text-[#a8a8a8]">
          {["1", "0: Current Run"].map((r) => (
            <tr key={r} className="h-10 border-b-2 border-[#e3e3e3]">
              <td className="bg-[#e4e4e4] p-0 pl-3"><Pin /></td>
              <td className="p-0 pl-[6px] align-top leading-[30px]">{r}</td>
            </tr>
          ))}
        </tbody>
      </table>
    </div>
    <div className={`flex h-10 items-center bg-[#e6e6e6] ${mono}`}>
      <button className="h-10 w-[240px] border-b-4 border-r-2 border-b-[#005587] border-r-[#b0b0b0] bg-white">Result Navigator</button>
      <button className="h-7 border-r-2 border-[#b0b0b0] px-6 leading-7">Parameter List</button>
    </div>
  </section>
);

const InfoIcon = () => (
  <svg width="28" height="30" viewBox="0 0 28 30" className="shrink-0">
    <circle cx="14" cy="14" r="12" fill="#f4f4fb" stroke="#888" strokeWidth="2.4" />
    <path d="M12 25L17 29L18 24" fill="#f4f4fb" stroke="#888" strokeWidth="1.8" />
    <path d="M12 7H16V10H12ZM11 12H16V19H18V21H10V19H12V14H11Z" fill="#1d2f94" />
  </svg>
);

const WarnIcon = () => (
  <svg width="28" height="26" viewBox="0 0 28 26" className="shrink-0">
    <path d="M14 2L27 25H1Z" fill="#f0b71c" stroke="#b98206" strokeWidth="1.5" strokeLinejoin="round" />
    <path d="M14 8V17M14 20V23" stroke="#333" strokeWidth="3" />
  </svg>
);

const messages = [
  { text: "", h: "h-11" },
  { text: "", h: "h-[72px]" },
  { text: "Calculating remaining monitors.", h: "h-11" },
  { text: "Running postprocessing.", h: "h-11" },
  { text: "Postprocessing finished.", h: "h-11" },
  { text: "Creating parametric 1D results for Run ID 1", h: "h-11" },
  { text: "1 warning occurred.", h: "h-11", warn: true },
];

const MessagesPanel = () => (
  <section className="flex w-[852px] shrink-0 flex-col bg-[#e6e6e6]">
    <PanelHeader title="Messages" />
    <div className="flex h-[42px] items-center pl-2">
      <svg width="28" height="28"><circle cx="14" cy="14" r="12" fill="#b0b0b0" stroke="#888" strokeWidth="3" /></svg>
    </div>
    <div className="mr-1 flex flex-1 border-b-2 border-l-2 border-t-2 border-[#777] border-b-[#ddd] bg-white">
      <ul className={`min-w-0 flex-1 pl-[10px] pt-2 ${mono}`}>
        {messages.map((m, i) => (
          <li key={i} className={`flex items-start gap-[10px] ${m.h}`}>
            <span className="pt-2">{m.warn ? <WarnIcon /> : <InfoIcon />}</span>
            <span className={`mr-[10px] h-full flex-1 pt-[6px] ${m.warn ? "" : "border-b-2 border-[#dcdcdc]"}`}>{m.text}</span>
          </li>
        ))}
      </ul>
      <div className="flex w-[34px] flex-col justify-end bg-[#cbcbcb]">
        <div className="h-[44px] border-2 border-[#aaa] bg-[#f0f0f0]" />
        <button aria-label="Scroll down" className="flex h-[34px] items-center justify-center border-2 border-[#aaa] bg-white">
          <svg width="18" height="10"><path d="M1 0H17L9 9Z" fill="#777" /></svg>
        </button>
      </div>
    </div>
    <div className={`flex h-11 items-end ${mono}`}>
      <button className="h-10 w-[144px] leading-9">Progress</button>
      <button className="h-10 w-[144px] border-b-4 border-[#005587] bg-white">Messages</button>
    </div>
  </section>
);

/* ---------- status bar ---------- */

const statusIcons: ReactNode[] = [
  <>
    <path d="M2 14V2H16" fill="none" stroke="#c96a1e" strokeWidth="2" strokeDasharray="2 2" />
    <circle cx="16" cy="15" r="9" fill="#f6f6f6" stroke="#666" strokeWidth="2.5" />
    <path d="M16 10V20M11 15H21" stroke="#b85a14" strokeWidth="2" />
    <path d="M22 22L30 31" stroke="#444" strokeWidth="4" />
  </>,
  <path d="M16 1L21 8H18V14H24V11L31 16L24 21V18H18V24H21L16 31L11 24H14V18H8V21L1 16L8 11V14H14V8H11Z" fill="#f0a832" stroke="#c07a18" strokeWidth="1" />,
  <>
    <circle cx="16" cy="12" r="10" fill="#7c7c7c" />
    <path d="M1 16C6 9 20 8 24 12L31 9L28 21L18 20L21 17C16 14 8 16 6 19C10 24 22 25 27 22C24 29 4 30 1 16Z" fill="#dd7a1c" />
    <path d="M8 29H24" stroke="#bbb" strokeWidth="3" />
  </>,
  <>
    <circle cx="15" cy="13" r="11" fill="#f6f6f6" stroke="#666" strokeWidth="2.5" />
    <path d="M15 4L21 11H9ZM15 22L21 15H9Z" fill="#d06a1c" />
    <path d="M22 21L30 31" stroke="#444" strokeWidth="4" />
  </>,
  <>
    <circle cx="16" cy="16" r="6" fill="#888" />
    <path d="M5 7C-2 22 8 30 16 29C27 28 31 16 25 7" fill="none" stroke="#e8962a" strokeWidth="5" />
    <path d="M16 3H29V14Z" fill="#e8962a" />
  </>,
  <>
    <rect x="3" y="2" width="26" height="28" fill="#fff" stroke="#888" strokeWidth="2" />
    <path d="M6 5h7l-7 7zM26 5h-7l7 7zM6 27h7l-7-7zM26 27h-7l7-7z" fill="#c9642a" />
    <path d="M8 7l5 6M24 7l-5 6M8 25l5-6M24 25l-5-6" stroke="#c9642a" strokeWidth="3" />
  </>,
  <>
    <path d="M4 12L8 8H22L26 12V26L22 30H4Z" fill="#b85f2c" />
    <path d="M4 12H22V30" fill="none" stroke="#7a3c18" strokeWidth="2" />
    <path d="M30 1L22 12L16 18" stroke="#333" strokeWidth="4" fill="none" />
  </>,
];

const Cube = () => (
  <svg width="44" height="32" viewBox="0 0 44 32" fill="none" stroke="#888" strokeWidth="2.2">
    <path d="M15 2L28 8V23L15 30L2 23V8ZM2 8L15 14L28 8M15 14V30" />
    <path d="M35 14H43L39 19Z" fill="#888" stroke="none" />
  </svg>
);

const Sheet = () => (
  <svg width="34" height="32" viewBox="0 0 34 32">
    <path d="M2 5H20V20H28V30H2Z" fill="#f0f0f0" stroke="#999" strokeWidth="2" />
    <path d="M6 12h4M6 18h4M6 24h4M13 24h10M13 18l4 4l6-8" stroke="#888" strokeWidth="2" fill="none" />
    <circle cx="25" cy="8" r="7" fill="#a5a5a5" />
    <path d="M25 4V12M21 8H29" stroke="#eee" strokeWidth="2" />
  </svg>
);

const StatusBar = () => (
  <footer className="flex h-[56px] shrink-0 items-center justify-between bg-[#f0f0f0] pl-3 text-[24px] text-[#444]">
    <span>Ready</span>
    <div className="flex items-center">
      {statusIcons.map((icon, i) => (
        <button
          key={i}
          aria-label={`View tool ${i + 1}`}
          className={`flex h-11 w-[46px] items-center justify-center ${i === 1 ? "bg-[#c6c6c6]" : ""} ${i === 5 ? "ml-[10px] border-l-2 border-[#d5d5d5]" : ""}`}
        >
          <svg width="32" height="32" viewBox="0 0 32 32">{icon}</svg>
        </button>
      ))}
      <button aria-label="View direction" className="ml-[18px] mr-2"><Cube /></button>
      <button aria-label="Report" className="border-l-2 border-[#d5d5d5] pl-3"><Sheet /></button>
      <span className="ml-6 border-r-2 border-black pr-3 leading-8">Raster=10.000</span>
      <span className="border-r-2 border-black pl-5 pr-[18px] leading-8">Tetrahedrons=18,212</span>
      <span className="border-r-2 border-black pl-4 pr-[18px] leading-8">Normal</span>
      <span className="mr-1 flex gap-[14px] border-r-2 border-black px-4 leading-8">
        <span>mm</span><span>GHz</span><span>ns</span><span>K</span>
      </span>
    </div>
  </footer>
);

/* ---------- dialog ---------- */

const field = "h-10 w-full border-2 border-[#ececec] border-b-[#868686] bg-white px-[6px] text-black rounded-xs";
const fieldOff = "h-10 w-full border-2 border-[#fafafa] bg-[#efefef] px-[8px] text-[#8a8a8a]";

const Radio = ({ name, label, checked, disabled, className = "" }: { name: string; label: string; checked?: boolean; disabled?: boolean; className?: string }) => (
  <label className={`flex items-center gap-[6px] ${disabled ? "text-[#8a8a8a]" : ""} ${className}`}>
    <input
      type="radio"
      name={name}
      defaultChecked={checked}
      disabled={disabled}
      className="h-[26px] w-[26px] shrink-0 appearance-none rounded-full border-2 border-[#767676] bg-[#f8f8f8] checked:border-8 checked:border-[#0062b8] checked:bg-white disabled:border-[#c8c8c8]"
    />
    {label}
  </label>
);

const Check = ({ label, checked, disabled, className = "" }: { label: string; checked?: boolean; disabled?: boolean; className?: string }) => (
  <label className={`flex items-center gap-[6px] ${disabled ? "text-[#8a8a8a]" : ""} ${className}`}>
    <span className="relative flex">
      <input
        type="checkbox"
        defaultChecked={checked}
        disabled={disabled}
        className="peer h-[26px] w-[26px] appearance-none rounded-[5px] border-2 border-[#666] bg-[#f8f8f8] checked:border-[#0062b8] checked:bg-[#0062b8] disabled:border-[#c8c8c8]"
      />
      <svg viewBox="0 0 26 26" className="pointer-events-none absolute inset-0 hidden h-[26px] w-[26px] peer-checked:block" fill="none" stroke="#fff" strokeWidth="2">
        <path d="M7 13L11 17L19 9" />
      </svg>
    </span>
    {label}
  </label>
);

const Select = ({ id, value, disabled }: { id: string; value: string; disabled?: boolean }) => (
  <span className="relative flex w-full items-center">
    <select
      id={id}
      disabled={disabled}
      className={`w-full appearance-none border-2 px-[6px] ${
        disabled ? "h-[42px] border-[#ececec] bg-[#f8f8f8] text-[#8a8a8a]" : "h-11 rounded-xs border-[#808080] bg-white"
      }`}
    >
      <option>{value}</option>
    </select>
    <svg width="18" height="12" viewBox="0 0 18 12" className="pointer-events-none absolute right-2" fill="none" stroke={disabled ? "#b5b5b5" : "#555"} strokeWidth="2">
      <path d="M1 2L9 10L17 2" />
    </svg>
  </span>
);

const PushButton = ({ label, disabled, className = "" }: { label: string; disabled?: boolean; className?: string }) => (
  <button
    disabled={disabled}
    className={`h-[46px] rounded-lg border-2 border-[#cfcfcf] bg-[#fdfdfd] leading-8 disabled:border-[#e6e6e6] disabled:bg-[#f8f8f8] disabled:text-[#8a8a8a] ${className}`}
  >
    {label}
  </button>
);

const Box = ({ title, children, className = "" }: { title: string; children: ReactNode; className?: string }) => (
  <fieldset className={`border-2 border-[#dadada] px-[23px] ${className}`}>
    <legend className="-ml-[14px] px-[6px] leading-8">{title}</legend>
    {children}
  </fieldset>
);

const GeneralRow = ({ label, htmlFor, height, children }: { label: string; htmlFor?: string; height: string; children: ReactNode }) => (
  <div className={`grid grid-cols-[151px_1fr] items-center pr-1 ${height}`}>
    <label htmlFor={htmlFor}>{label}</label>
    <div className="flex min-w-0 items-center">{children}</div>
  </div>
);

const rangeCls =
  "h-[38px] w-full appearance-none bg-transparent " +
  "[&::-webkit-slider-runnable-track]:h-[8px] [&::-webkit-slider-runnable-track]:border-2 [&::-webkit-slider-runnable-track]:border-[#d4d4d4] [&::-webkit-slider-runnable-track]:bg-[#e7eaea] " +
  "[&::-webkit-slider-thumb]:-mt-[17px] [&::-webkit-slider-thumb]:h-[38px] [&::-webkit-slider-thumb]:w-[22px] [&::-webkit-slider-thumb]:appearance-none [&::-webkit-slider-thumb]:bg-[#0078d7] [&::-webkit-slider-thumb]:[clip-path:polygon(50%_0,100%_28%,100%_100%,0_100%,0_28%)]";

const axisRows = [
  { a: "Xmin", av: "8", b: "Xmax", bv: "28", h: "h-[60px]" },
  { a: "Zmin:", av: "0", b: "Zmax:", bv: "5*0.8", h: "h-[66px]" },
];

const PortDialog = () => (
  <div role="dialog" aria-label="Modify Waveguide Port" className="absolute right-4 top-10 w-[816px] overflow-hidden rounded-2xl bg-[#efefef] pb-[22px] text-[23px] text-black shadow-[0_0_0_2px_rgba(110,110,110,0.55),0_28px_70px_rgba(0,0,0,0.42)]">
    <div className="flex h-[60px] items-center justify-between bg-[#f3f3f3] pl-4 pr-[23px] text-[#8c8c8c]">
      <h2>Modify Waveguide Port</h2>
      <button aria-label="Close dialog"><CloseX size={22} color="#999" width={1.5} /></button>
    </div>
    <div className="flex flex-col gap-[14px] px-[25px] pt-[17px]">
      <div className="flex items-start gap-[30px]">
        <Box title="General" className="w-[563px] pb-[10px]">
          <GeneralRow label="Name:" htmlFor="name" height="h-[60px]"><Select id="name" value="2" disabled /></GeneralRow>
          <GeneralRow label="Folder:" htmlFor="folder" height="h-[50px]"><Select id="folder" value="" /></GeneralRow>
          <GeneralRow label="Label:" htmlFor="label" height="h-[58px]"><input id="label" className={field} /></GeneralRow>
          <GeneralRow label="Normal:" height="h-[58px]">
            <Radio name="normal" label="X" className="ml-[2px] w-[90px]" />
            <Radio name="normal" label="Y" checked className="w-[91px]" />
            <Radio name="normal" label="Z" />
          </GeneralRow>
          <GeneralRow label="Orientation:" height="h-[62px]">
            <Radio name="orient" label="Positive" className="ml-[2px] w-[164px]" />
            <Radio name="orient" label="Negative" checked />
          </GeneralRow>
          <GeneralRow label="Text size:" htmlFor="size" height="h-[60px]">
            <div className="w-full pr-1">
              <div className="flex justify-between px-[10px]">
                {Array.from({ length: 11 }, (_, i) => <span key={i} className="h-[7px] w-[2px] bg-[#c4c4c4]" />)}
              </div>
              <input id="size" type="range" defaultValue={50} className={rangeCls} />
            </div>
          </GeneralRow>
          <Check label="Limit text size to port area" checked className="ml-[153px] h-[60px]" />
        </Box>
        <div className="flex flex-1 flex-col gap-[13px] pt-3">
          <PushButton label="OK" />
          <PushButton label="Cancel" />
          <PushButton label="Apply" disabled />
          <PushButton label="Preview" />
          <PushButton label="Help" />
        </div>
      </div>

      <Box title="Position" className="pb-4">
        <div className="flex h-[60px] items-center">
          <span className="w-[164px]">Coordinates:</span>
          <Radio name="coord" label="Free" checked className="w-[136px]" />
          <Radio name="coord" label="Full plane" className="w-[190px]" />
          <Radio name="coord" label="Use picks" disabled />
        </div>
        {axisRows.map((r) => (
          <div key={r.a} className={`grid grid-cols-[74px_104px_50px_104px_38px_86px_104px_50px_1fr] items-center ${r.h}`}>
            <label htmlFor={r.a}>{r.a}</label>
            <input id={r.a} defaultValue={r.av} className={field} />
            <span className="text-center text-[#a0a0a0]">-</span>
            <input aria-label={`${r.a} offset`} defaultValue="0.0" disabled className={fieldOff} />
            <span />
            <label htmlFor={r.b}>{r.b}</label>
            <input id={r.b} defaultValue={r.bv} className={field} />
            <span className="text-center text-[#a0a0a0]">+</span>
            <input aria-label={`${r.b} offset`} defaultValue="0.0" disabled className={fieldOff} />
          </div>
        ))}
        <div className="grid h-[56px] grid-cols-[72px_298px_86px_1fr] items-center">
          <span />
          <Check label="Free normal position" checked />
          <label htmlFor="ypos">Ypos:</label>
          <input id="ypos" defaultValue="93.5" className={field} />
        </div>
      </Box>

      <Box title="Reference plane" className="pb-[14px]">
        <div className="grid h-[56px] grid-cols-[408px_214px] items-center">
          <label htmlFor="dist">Distance to ref. plane:</label>
          <input id="dist" defaultValue="0" className={field} />
        </div>
      </Box>

      <Box title="Mode settings" className="pb-[18px]">
        <div className="grid grid-cols-[406px_216px]">
          <div className="flex flex-col items-start">
            <Check label="Multipin port" className="h-[56px]" />
            <PushButton label="Define Pins..." className="ml-[2px] w-[210px]" />
            <Check label="Single-ended" disabled className="ml-[30px] h-[46px]" />
            <Check label="Monitor only" className="h-[59px]" />
            <Check label="Impedance and calibration" className="h-[44px]" />
            <PushButton label="Define Lines..." className="ml-[2px] w-[210px]" />
          </div>
          <div className="flex flex-col items-stretch">
            <label htmlFor="modes" className="h-[45px] leading-[42px]">Number of modes:</label>
            <div className="flex h-11">
              <input id="modes" defaultValue="1" className="h-11 min-w-0 flex-1 border-2 border-[#ececec] border-b-[#868686] bg-white px-[6px]" />
              <div className="flex w-9 flex-col justify-between border-2 border-[#b0b0b8] bg-[#e4e4e4]">
                <button aria-label="Increase" className="flex h-5 items-center justify-center border-2 border-[#999] bg-[#f0f0f0]">
                  <svg width="10" height="6"><path d="M0 6H10L5 0Z" /></svg>
                </button>
                <button aria-label="Decrease" className="flex h-5 items-center justify-center border-2 border-[#999] bg-[#f0f0f0]">
                  <svg width="10" height="6"><path d="M0 0H10L5 6Z" /></svg>
                </button>
              </div>
            </div>
            <Check label="Ensure shielding" className="h-[60px] whitespace-nowrap pt-2" />
            <Select id="shield" value="Electric" disabled />
            <Check label="Polarization angle" className="h-[60px] whitespace-nowrap pt-2" />
            <input aria-label="Polarization angle value" defaultValue="0.0" disabled className={fieldOff} />
          </div>
        </div>
      </Box>
    </div>
    <svg width="24" height="28" viewBox="0 0 24 28" className="absolute bottom-0 right-0" stroke="#8a8a8a" strokeWidth="2">
      <path d="M0 28L24 2M8 28L24 11M16 28L24 19" />
    </svg>
  </div>
);

export default function App() {
  return (
    <div className="relative flex h-screen flex-col overflow-hidden bg-[#dedede] font-['Open_Sans','Noto_Sans_CJK_SC',sans-serif] text-black">
      <RibbonDefs />
      <TitleBar />
      <Ribbon />
      <main className="flex min-h-0 flex-1 gap-2">
        <LeftPanel />
        <div className="flex min-w-0 flex-1 flex-col">
          <ViewArea />
          <div className="h-2 shrink-0 bg-[#c9c9c9]" />
          <div className="flex h-[472px] shrink-0 gap-2">
            <ResultNavigator />
            <MessagesPanel />
          </div>
        </div>
      </main>
      <StatusBar />
      <div className="flex h-4 shrink-0 items-end overflow-hidden border-t-2 border-[#a9abb5] bg-[#d9dbe9]">
        <span className="ml-[64px] h-1 w-6 rounded-t-full bg-[#c8281e]" />
        <span className="ml-[1402px] h-2 w-[78px] rounded-t-lg bg-[#e8e9f1]" />
        <span className="ml-2 h-[10px] w-20 rounded-t-lg bg-[#fce3e4]" />
      </div>
      <p className="absolute bottom-2 right-3 text-[14px] leading-4 text-[#777]">CSDN @木棉.</p>
      <PortDialog />
    </div>
  );
}
